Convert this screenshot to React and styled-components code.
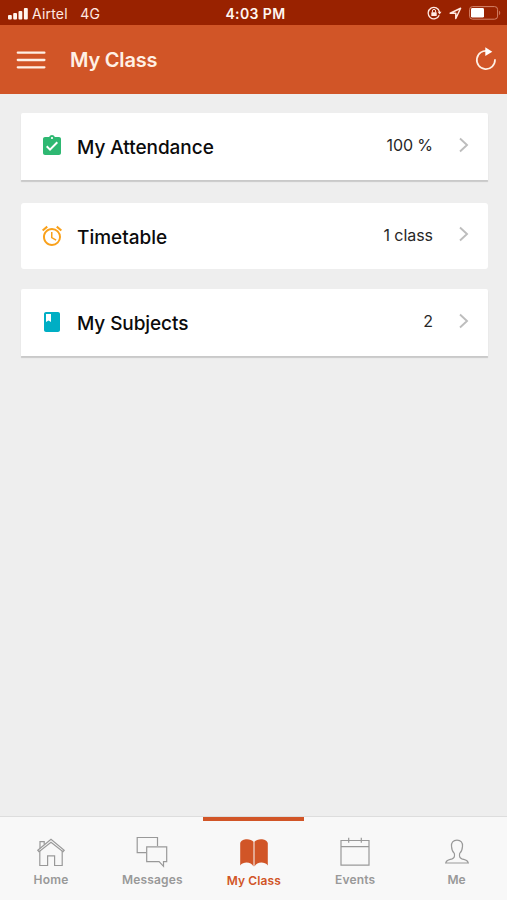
import React from 'react';
import styled, { createGlobalStyle } from 'styled-components';

const GlobalStyle = createGlobalStyle`
  * { box-sizing: border-box; }
  body { margin: 0; background: #eeeeee; }
  svg { display: block; flex: none; }
`;

const Screen = styled.div`
  display: flex;
  flex-direction: column;
  width: 507px;
  height: 900px;
  background: #eeeeee;
  font-family: Inter, "Liberation Sans", sans-serif;
  overflow: hidden;
`;

const StatusBar = styled.header`
  display: grid;
  grid-template-columns: 1fr auto 1fr;
  align-items: center;
  height: 25px;
  padding: 2px 6px 0 8px;
  background: #992200;
  color: #ffe9e2;
  font-size: 14px;
  line-height: 20px;
`;

const StatusGroup = styled.div`
  display: flex;
  align-items: center;
  justify-content: ${(p) => (p.$end ? 'flex-end' : 'flex-start')};
  margin-top: ${(p) => (p.$end ? -1 : 0)}px;
`;

const StatusText = styled.span`
  margin-left: ${(p) => p.$gap}px;
  letter-spacing: ${(p) => p.$spacing || 0}px;
  white-space: nowrap;
`;

const Clock = styled.time`
  padding-left: 2px;
  color: #fff5f0;
  font-weight: 600;
  letter-spacing: 0.4px;
`;

const NavBar = styled.nav`
  display: flex;
  align-items: center;
  height: 69px;
  padding: 0 10px 0 16px;
  background: #d15527;
  color: #fff0e5;
`;

const IconButton = styled.button`
  display: flex;
  margin-top: ${(p) => p.$lift || 0}px;
  padding: 0;
  border: 0;
  background: none;
  color: inherit;
`;

const Title = styled.h1`
  flex: 1;
  margin: 0 0 0 24px;
  font-size: 20px;
  font-weight: 600;
  line-height: 24px;
  letter-spacing: -0.2px;
`;

const CardList = styled.main`
  flex: 1;
  display: flex;
  flex-direction: column;
  padding: 19px 19.5px 0 20.5px;
`;

const Card = styled.section`
  display: flex;
  align-items: center;
  height: ${(p) => (p.$raised ? 67 : 66)}px;
  margin-bottom: ${(p) => p.$gap}px;
  padding: 0 19px 0 19.5px;
  border-radius: ${(p) => (p.$raised ? '2px 2px 0 0' : '3px')};
  background: #ffffff;
  box-shadow: ${(p) => (p.$raised ? '0 2px 1px #c9c9c9' : 'none')};
`;

const CardIcon = styled.span`
  margin-top: -1px;
`;

const CardLabel = styled.h2`
  flex: 1;
  margin: 3px 0 0 13px;
  color: #0b0b0b;
  font-size: 19px;
  font-weight: 500;
  line-height: 26px;
  letter-spacing: ${(p) => p.$spacing}px;
`;

const CardValue = styled.span`
  margin: -3px 24.5px 0 0;
  color: #272727;
  font-size: 16px;
  line-height: 20px;
  letter-spacing: ${(p) => p.$spacing}px;
`;

const ChevronSlot = styled.span`
  margin-top: -4px;
`;

const TabBar = styled.footer`
  display: grid;
  grid-template-columns: repeat(5, 1fr);
  height: 83px;
  background: #f8f8f8;
  box-shadow: 0 -1px 0 #dddddd;
`;

const Tab = styled.button`
  display: flex;
  flex-direction: column;
  align-items: center;
  padding: 14px 0 0 0.6px;
  border: 0;
  border-top: 4px solid ${(p) => (p.$active ? '#d15527' : 'transparent')};
  background: none;
  color: ${(p) => (p.$active ? '#d15527' : '#999999')};
  font-family: inherit;
`;

const TabLabel = styled.span`
  margin-top: ${(p) => (p.$active ? 4 : 2.5)}px;
  font-size: 12px;
  font-weight: 600;
  line-height: 16px;
  letter-spacing: ${(p) => p.$spacing}px;
`;

const Signal = () => (
  <svg width="21" height="12" viewBox="0 0 21 12" fill="#fff5ee">
    <rect x="0" y="7" width="3.8" height="4.5" rx="1" />
    <rect x="5.2" y="5" width="3.8" height="6.5" rx="1" />
    <rect x="10.5" y="3" width="3.8" height="8.5" rx="1" />
    <rect x="15.9" y="0" width="3.9" height="11.5" rx="1" />
  </svg>
);

const RotationLock = () => (
  <svg width="15" height="14" viewBox="0 0 15 14" fill="none" stroke="#ffe9e2" strokeWidth="1.3">
    <path d="M12.2 9.2A5.7 5.7 0 1 1 12.5 6" />
    <path d="M10.7 5.7h3.8l-1.9 2.7z" fill="#ffe9e2" stroke="none" />
    <rect x="4.3" y="6.3" width="5.4" height="3.8" rx=".5" fill="#ffe9e2" stroke="none" />
    <path d="M5.4 6.5V5a1.6 1.6 0 0 1 3.2 0v1.5" strokeWidth="1" />
  </svg>
);

const LocationArrow = () => (
  <svg width="13" height="13" viewBox="0 0 13 13" fill="none" stroke="#ffe9e2" strokeWidth="1.5" strokeLinejoin="round">
    <path d="M1.2 6.2 11.6 1.2 6.8 11.5V6.2Z" />
  </svg>
);

const Battery = () => (
  <svg width="32" height="14" viewBox="0 0 32 14" fill="none">
    <rect x=".6" y=".6" width="28" height="12.6" rx="3" stroke="#d58469" />
    <rect x="2" y="2" width="13" height="9.6" rx="1.4" fill="#ffffff" />
    <path d="M30.2 4.8c1.3.5 1.3 3.8 0 4.3z" fill="#d58469" />
  </svg>
);

const MenuIcon = () => (
  <svg width="30" height="20" viewBox="0 0 30 20" stroke="#fff0e5" strokeWidth="2.3" strokeLinecap="round">
    <path d="M1.8 2.7H28.4M1.8 10H28.4M1.8 17.3H28.4" />
  </svg>
);

const RefreshIcon = () => (
  <svg width="22" height="24" viewBox="0 0 22 24" fill="none">
    <path d="M13 4.1A9.1 9.1 0 1 0 20 12.8" stroke="#fff0e5" strokeWidth="1.7" strokeLinecap="round" />
    <path d="M10.3.3 17.3 4.7 10.3 9z" fill="#ffffff" />
  </svg>
);

const AttendanceIcon = () => (
  <svg width="24" height="24" viewBox="0 0 24 24" fill="#2eb872">
    <path d="M19 3h-4.18C14.4 1.84 13.3 1 12 1c-1.3 0-2.4.84-2.82 2H5c-1.1 0-2 .9-2 2v14c0 1.1.9 2 2 2h14c1.1 0 2-.9 2-2V5c0-1.1-.9-2-2-2zm-7 0c.55 0 1 .45 1 1s-.45 1-1 1-1-.45-1-1 .45-1 1-1zm-2 14-4-4 1.41-1.41L10 14.17l6.59-6.59L18 9l-8 8z" />
  </svg>
);

const AlarmIcon = () => (
  <svg width="24" height="24" viewBox="0 0 24 24" fill="#f9a11b">
    <path d="m22 5.72-4.6-3.86-1.29 1.53 4.6 3.86L22 5.72zM7.88 3.39 6.6 1.86 2 5.71l1.29 1.53 4.59-3.85zM12.5 8H11v6l4.75 2.85.75-1.23-4-2.37V8zM12 4c-4.97 0-9 4.03-9 9s4.02 9 9 9a9 9 0 0 0 0-18zm0 16c-3.87 0-7-3.13-7-7s3.13-7 7-7 7 3.13 7 7-3.13 7-7 7z" />
  </svg>
);

const SubjectIcon = () => (
  <svg width="24" height="24" viewBox="0 0 24 24" fill="#00aec4">
    <path d="M18 2H6c-1.1 0-2 .9-2 2v16c0 1.1.9 2 2 2h12c1.1 0 2-.9 2-2V4c0-1.1-.9-2-2-2zM6 4h5v8l-2.5-1.5L6 12V4z" />
  </svg>
);

const Chevron = () => (
  <svg width="11" height="16" viewBox="0 0 11 16" fill="none" stroke="#bdbdbd" strokeWidth="1.9">
    <path d="M2 1.5 9 8l-7 6.5" />
  </svg>
);

const tabStroke = { fill: 'none', stroke: '#999999', strokeWidth: 1.2 };

const HomeIcon = () => (
  <svg width="32" height="34" viewBox="0 0 32 34" {...tabStroke}>
    <path d="m2.8 15.2 13.2-11 13.2 11-1.2 1.4L16 7.3 4 16.6z" />
    <path d="M4.8 15.8v14.7h7.8V20.8h7v9.7h7.6V15.8M5 13.2V6.6h4.2v3" />
  </svg>
);

const MessagesIcon = () => (
  <svg width="32" height="34" viewBox="0 0 32 34" {...tabStroke}>
    <path d="M10.3 17.7H1.2V2.5h20.3v8.4" />
    <path d="M10.7 11.8h20v14.9h-3.2v4.6l-4.4-4.6H10.7z" />
  </svg>
);

const BookIcon = () => (
  <svg width="32" height="34" viewBox="0 0 32 34" fill="#d15527">
    <path d="M2.2 8.2C3.2 3.4 12.8 3.2 15.5 6.8v24.6C13.2 26.6 5.4 26.4 2.2 30.4z" />
    <path d="M29.8 8.2C28.8 3.4 19.2 3.2 16.5 6.8v24.6C18.8 26.6 26.6 26.4 29.8 30.4z" />
  </svg>
);

const CalendarIcon = () => (
  <svg width="32" height="34" viewBox="0 0 32 34" {...tabStroke}>
    <path d="M2 5.5h28v24.7H2zM2 11.7h28M9.7 2.8v5M22.3 2.8v5" />
  </svg>
);

const PersonIcon = () => (
  <svg width="32" height="34" viewBox="0 0 32 34" {...tabStroke}>
    <path d="M16 5.2c-4 0-5.8 2.6-5.5 6 .2 3.4 1 5.6 2.8 7.2.8 3.1.3 4.6-2.2 5.5-3 1-5.8 1-6.4 4.1h22.6c-.6-3.1-3.4-3.1-6.4-4.1-2.5-.9-3-2.4-2.2-5.5 1.8-1.6 2.6-3.8 2.8-7.2.3-3.4-1.5-6-5.5-6z" />
  </svg>
);

const cards = [
  { label: 'My Attendance', value: '100 %', icon: AttendanceIcon, raised: true, gap: 23, spacing: -0.05, valueSpacing: -0.1 },
  { label: 'Timetable', value: '1 class', icon: AlarmIcon, raised: false, gap: 20, spacing: 0, valueSpacing: -0.05 },
  { label: 'My Subjects', value: '2', icon: SubjectIcon, raised: true, gap: 0, spacing: -0.1, valueSpacing: 0 },
];

const tabs = [
  { label: 'Home', icon: HomeIcon, spacing: 0.2 },
  { label: 'Messages', icon: MessagesIcon, spacing: 0.15 },
  { label: 'My Class', icon: BookIcon, active: true, spacing: 0.1 },
  { label: 'Events', icon: CalendarIcon, spacing: 0.15 },
  { label: 'Me', icon: PersonIcon, spacing: 0 },
];

export default function App() {
  return (
    <Screen>
      <GlobalStyle />
      <StatusBar>
        <StatusGroup>
          <Signal />
          <StatusText $gap={3} $spacing={0.2}>Airtel</StatusText>
          <StatusText $gap={12.5} $spacing={0.2}>4G</StatusText>
        </StatusGroup>
        <Clock>4:03 PM</Clock>
        <StatusGroup $end>
          <RotationLock />
          <StatusText $gap={7}><LocationArrow /></StatusText>
          <StatusText $gap={7}><Battery /></StatusText>
        </StatusGroup>
      </StatusBar>
      <NavBar>
        <IconButton aria-label="Menu"><MenuIcon /></IconButton>
        <Title>My Class</Title>
        <IconButton aria-label="Refresh" $lift={-2}><RefreshIcon /></IconButton>
      </NavBar>
      <CardList>
        {cards.map(({ label, value, icon: Icon, raised, gap, spacing, valueSpacing }) => (
          <Card key={label} $raised={raised} $gap={gap}>
            <CardIcon><Icon /></CardIcon>
            <CardLabel $spacing={spacing}>{label}</CardLabel>
            <CardValue $spacing={valueSpacing}>{value}</CardValue>
            <ChevronSlot><Chevron /></ChevronSlot>
          </Card>
        ))}
      </CardList>
      <TabBar>
        {tabs.map(({ label, icon: Icon, active, spacing }) => (
          <Tab key={label} $active={active}>
            <Icon />
            <TabLabel $active={active} $spacing={spacing}>{label}</TabLabel>
          </Tab>
        ))}
      </TabBar>
    </Screen>
  );
}
